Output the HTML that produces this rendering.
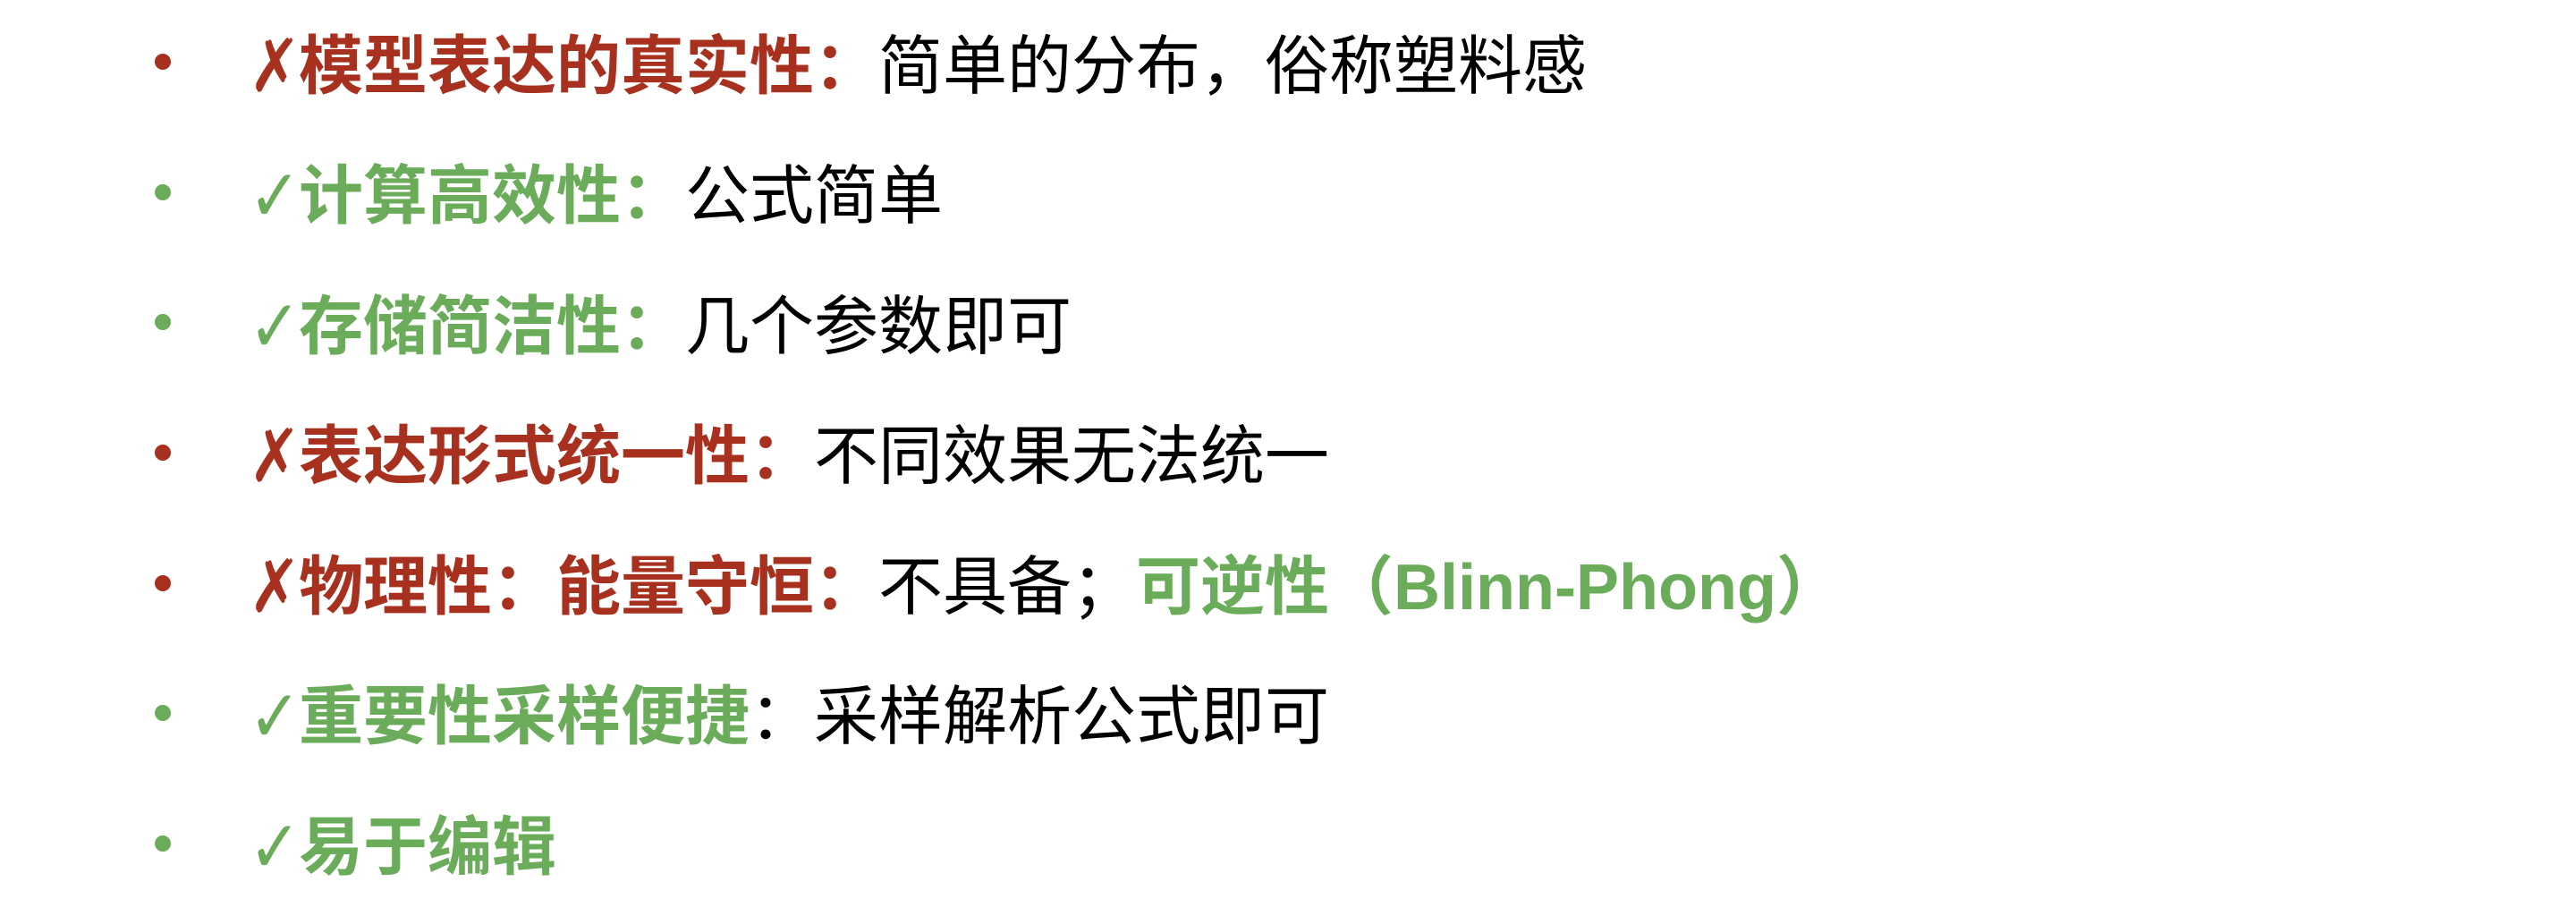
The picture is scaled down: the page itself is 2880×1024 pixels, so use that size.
<!DOCTYPE html>
<html><head><meta charset="utf-8"><style>
html,body{margin:0;padding:0;background:#fff;width:2880px;height:1024px;overflow:hidden}
.l{position:absolute;left:278px;height:146px;line-height:146px;font-size:72px;white-space:nowrap;font-family:"Liberation Sans","Noto Sans CJK SC",sans-serif;color:#000}
.d{position:absolute;left:173px;width:18px;height:18px;border-radius:50%}
.r{color:#a8301e;font-weight:bold}
.g{color:#6aac5a;font-weight:bold}
.s{font-family:"DejaVu Sans","Noto Sans CJK SC",sans-serif;font-size:82px;display:inline-block;width:56px;vertical-align:top;transform:scaleX(0.85);transform-origin:left}
</style></head><body>
<div class="d" style="top:60px;background:#a8301e"></div>
<div class="d" style="top:206px;background:#6aac5a"></div>
<div class="d" style="top:351px;background:#6aac5a"></div>
<div class="d" style="top:497px;background:#a8301e"></div>
<div class="d" style="top:643px;background:#a8301e"></div>
<div class="d" style="top:788px;background:#6aac5a"></div>
<div class="d" style="top:934px;background:#6aac5a"></div>

<div class="l" style="top:2px"><span class="r"><span class="s">✗</span>模型表达的真实性：</span>简单的分布，俗称塑料感</div>
<div class="l" style="top:147px"><span class="g"><span class="s">✓</span>计算高效性：</span>公式简单</div>
<div class="l" style="top:293px"><span class="g"><span class="s">✓</span>存储简洁性：</span>几个参数即可</div>
<div class="l" style="top:438px"><span class="r"><span class="s">✗</span>表达形式统一性：</span>不同效果无法统一</div>
<div class="l" style="top:584px"><span class="r"><span class="s">✗</span>物理性：能量守恒：</span>不具备；<span class="g">可逆性（Blinn-Phong）</span></div>
<div class="l" style="top:729px"><span class="g"><span class="s">✓</span>重要性采样便捷</span>：采样解析公式即可</div>
<div class="l" style="top:875px"><span class="g"><span class="s">✓</span>易于编辑</span></div>
</body></html>
